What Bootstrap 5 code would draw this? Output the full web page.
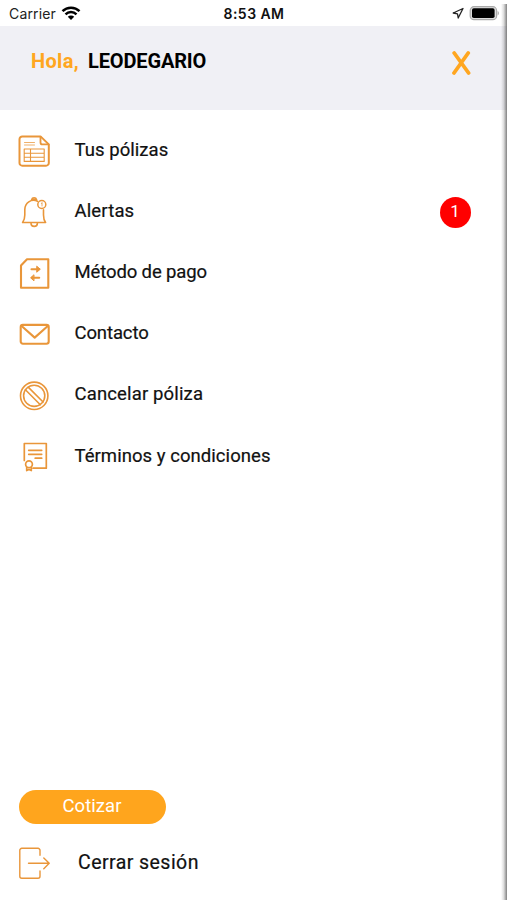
<!DOCTYPE html>
<html lang="es">
<head>
<meta charset="utf-8">
<meta name="viewport" content="width=device-width, initial-scale=1">
<title>Menú</title>
<link href="https://cdn.jsdelivr.net/npm/bootstrap@5.3.0/dist/css/bootstrap.min.css" rel="stylesheet">
<style>
body{font-family:Roboto,"Liberation Sans",sans-serif;color:#111;background:#fff}
.screen{height:900px;overflow:hidden}
.edge{top:4px;bottom:0;right:0;width:6px;background:linear-gradient(90deg,rgba(90,90,90,0),rgba(90,90,90,.2) 45%,rgba(80,80,80,.72))}
.status{height:26px;font-family:Inter,sans-serif;font-size:14px;line-height:26px;color:#222;padding:1px 8px 0 9px}
.carrier{letter-spacing:.15px}
.clock{font-weight:600;font-size:14px;color:#111;letter-spacing:.45px}
.hello{height:84px;background:#f0f0f5;padding:21px 36px 0 31px;font-size:20px;line-height:28px}
.hola{color:#ffa620;letter-spacing:.35px}
.username{color:#000;margin-left:9px;letter-spacing:-.15px}
.close-x{margin-top:3px}
.menu-list{padding:10px 0 0 18px}
.menu-row{height:61.2px;font-size:18.5px;line-height:24px;letter-spacing:.05px;color:#111}
.menu-row svg,.logout svg{width:32px;height:32px;flex:none;fill:none;stroke:#e9963a;stroke-width:1.8;stroke-linecap:round;stroke-linejoin:round}
.menu-row .label,.logout span{-webkit-text-stroke:.2px #111}
.menu-row .label{margin:-2px 0 0 24.5px}
.label.spread{letter-spacing:.15px}
.label.snug{letter-spacing:-.12px}
.count{width:31px;height:31px;background:#f00;margin:2px 36.5px 0 0;font-size:17px;letter-spacing:0;color:#fff;padding-bottom:3px}
.quote{width:147px;height:34px;background:#ffa51d;color:#fff;border:0;border-radius:17px;font-size:18.5px;line-height:24px;letter-spacing:.05px;padding:0 1px 3px 0;margin-left:19px}
.logout{height:76px;padding:2px 0 0 18px;font-size:19.5px;letter-spacing:.45px;line-height:24px}
.logout span{margin:-1px 0 0 28px}
</style>
</head>
<body>
<main class="screen d-flex flex-column position-relative">
  <div class="status row g-0 flex-nowrap">
    <div class="col d-flex align-items-center"><span class="carrier">Carrier</span>
      <svg class="ms-1" width="21" height="15" viewBox="0 0 21 15" fill="none" stroke="#000" stroke-width="2.5"><path d="M2.5 5.1a12.2 12.2 0 0 1 17 0M5.5 8.3a8 8 0 0 1 11 0"/><path d="M11 13.9 7.8 10.7a4.6 4.6 0 0 1 6.4 0z" fill="#000" stroke="none"/></svg>
    </div>
    <div class="col-auto clock">8:53 AM</div>
    <div class="col d-flex align-items-center justify-content-end">
      <svg class="me-1" width="13" height="13" viewBox="0 0 13 13" fill="none" stroke="#222" stroke-width="1.3" stroke-linejoin="round"><path d="M12 1.5 2.2 6l4.3.8.7 4.2z"/></svg>
      <svg width="31" height="15" viewBox="0 0 31 15"><rect x="2.2" y=".7" width="26.4" height="13" rx="3.8" fill="#ddd" stroke="#aaa" stroke-width="1.2"/><rect x="4" y="2.3" width="22.6" height="9.8" rx="1.8" fill="#000"/><path d="M29.6 5c1.7.7 1.7 3.7 0 4.4z" fill="#aaa"/></svg>
    </div>
  </div>
  <header class="hello d-flex align-items-start justify-content-between">
    <div class="fw-bold d-flex"><span class="hola">Hola,</span><span class="username">LEODEGARIO</span></div>
    <svg class="close-x" width="20" height="26" viewBox="0 0 20 26" fill="none" stroke="#ffa620" stroke-width="3.8" stroke-linecap="round"><path d="M3.2 3 17.6 23M17.2 3 3 23"/></svg>
  </header>
  <nav class="menu-list" aria-label="Menú">
    <div class="menu-row d-flex align-items-center">
      <svg viewBox="0 0 32 32"><path d="M4.3 1.4h18.2l8.3 8v18.5a2.8 2.8 0 0 1-2.8 2.8H4.3a2.8 2.8 0 0 1-2.8-2.8V4.2a2.8 2.8 0 0 1 2.8-2.8z" style="stroke-width:2"/><path d="M22.5 1.8v5.6a2 2 0 0 0 2 2h6"/><path d="M6.5 7.5h10M6.5 10h10" style="stroke-width:1" opacity=".75"/><path d="M6.2 14h20v12.4h-20zM6.2 18.2h20M6.2 22.3h20M12.5 14v12.4" style="stroke-width:1.1"/></svg>
      <span class="label">Tus pólizas</span>
    </div>
    <div class="menu-row d-flex align-items-center">
      <svg viewBox="0 0 32 32"><path d="M19.5 5.2C13 2.4 7 7 6.8 13.5v5.5c0 3.3-.7 5.5-2.2 7.5h23c-1.6-2-2.1-4.2-2.1-7.5v-5.2" style="stroke-width:1.6"/><path d="M13.6 3.8a2.6 2.6 0 0 1 5 0zM13 27.2a3.2 3.2 0 0 0 6.4 0" style="stroke-width:1.6"/><circle cx="23.8" cy="8.5" r="4" style="stroke-width:1.5"/><path d="M24 7v3M23.3 7.4l.7-.4" style="stroke-width:.8"/></svg>
      <span class="label spread">Alertas</span>
      <span class="count rounded-circle ms-auto d-flex align-items-center justify-content-center">1</span>
    </div>
    <div class="menu-row d-flex align-items-center">
      <svg viewBox="0 0 32 32" style="stroke-width:2.1"><path d="M9 2.2h21.3v28.5H3V8.4z"/><path d="M13.5 12.2h7M14 20.8h7.2"/><path d="m19 9.4 3.3 2.8-3.3 2.8zM15.7 18l-3.1 2.8 3.1 2.8z" fill="#e9963a" style="stroke-width:1"/></svg>
      <span class="label snug">Método de pago</span>
    </div>
    <div class="menu-row d-flex align-items-center">
      <svg viewBox="0 0 32 32" style="stroke-width:2.1"><rect x="2.7" y="6.9" width="28" height="18.8" rx="2.2"/><path d="m3.6 8 13.1 11.6L29.8 8"/></svg>
      <span class="label snug">Contacto</span>
    </div>
    <div class="menu-row d-flex align-items-center">
      <svg viewBox="0 0 32 32" style="stroke-width:1.6"><circle cx="16.2" cy="16.8" r="13.7"/><circle cx="16.2" cy="16.8" r="10.6"/><path d="m7.4 10.8 14.9 14.9M10.2 8.1l14.9 14.9"/></svg>
      <span class="label spread">Cancelar póliza</span>
    </div>
    <div class="menu-row d-flex align-items-center">
      <svg viewBox="0 0 32 32" style="stroke-width:1.7"><path d="M6.3 19.5V2.5h22v24.7H15"/><path d="M10.7 9.3h13M10.7 13.3h13M17.2 17.2h6.5"/><circle cx="11" cy="23.2" r="3.4"/><path d="M8.7 26.2v3.4l2.3-1.2 2.3 1.2v-3.4"/></svg>
      <span class="label">Términos y condiciones</span>
    </div>
  </nav>
  <footer class="mt-auto">
    <button type="button" class="quote d-flex align-items-center justify-content-center">Cotizar</button>
    <div class="logout d-flex align-items-center">
      <svg viewBox="0 0 32 32" style="stroke-width:1.4"><path d="M22 8.2V3.3a2 2 0 0 0-2-2H3.8a2 2 0 0 0-2 2v26a2 2 0 0 0 2 2H20a2 2 0 0 0 2-2v-5.4M10.5 16.3h20.5M25.8 11l5.4 5.3-5.4 5.4"/></svg>
      <span>Cerrar sesión</span>
    </div>
  </footer>
  <div class="edge position-absolute"></div>
</main>
<script src="https://cdn.jsdelivr.net/npm/bootstrap@5.3.0/dist/js/bootstrap.bundle.min.js"></script>
</body>
</html>
